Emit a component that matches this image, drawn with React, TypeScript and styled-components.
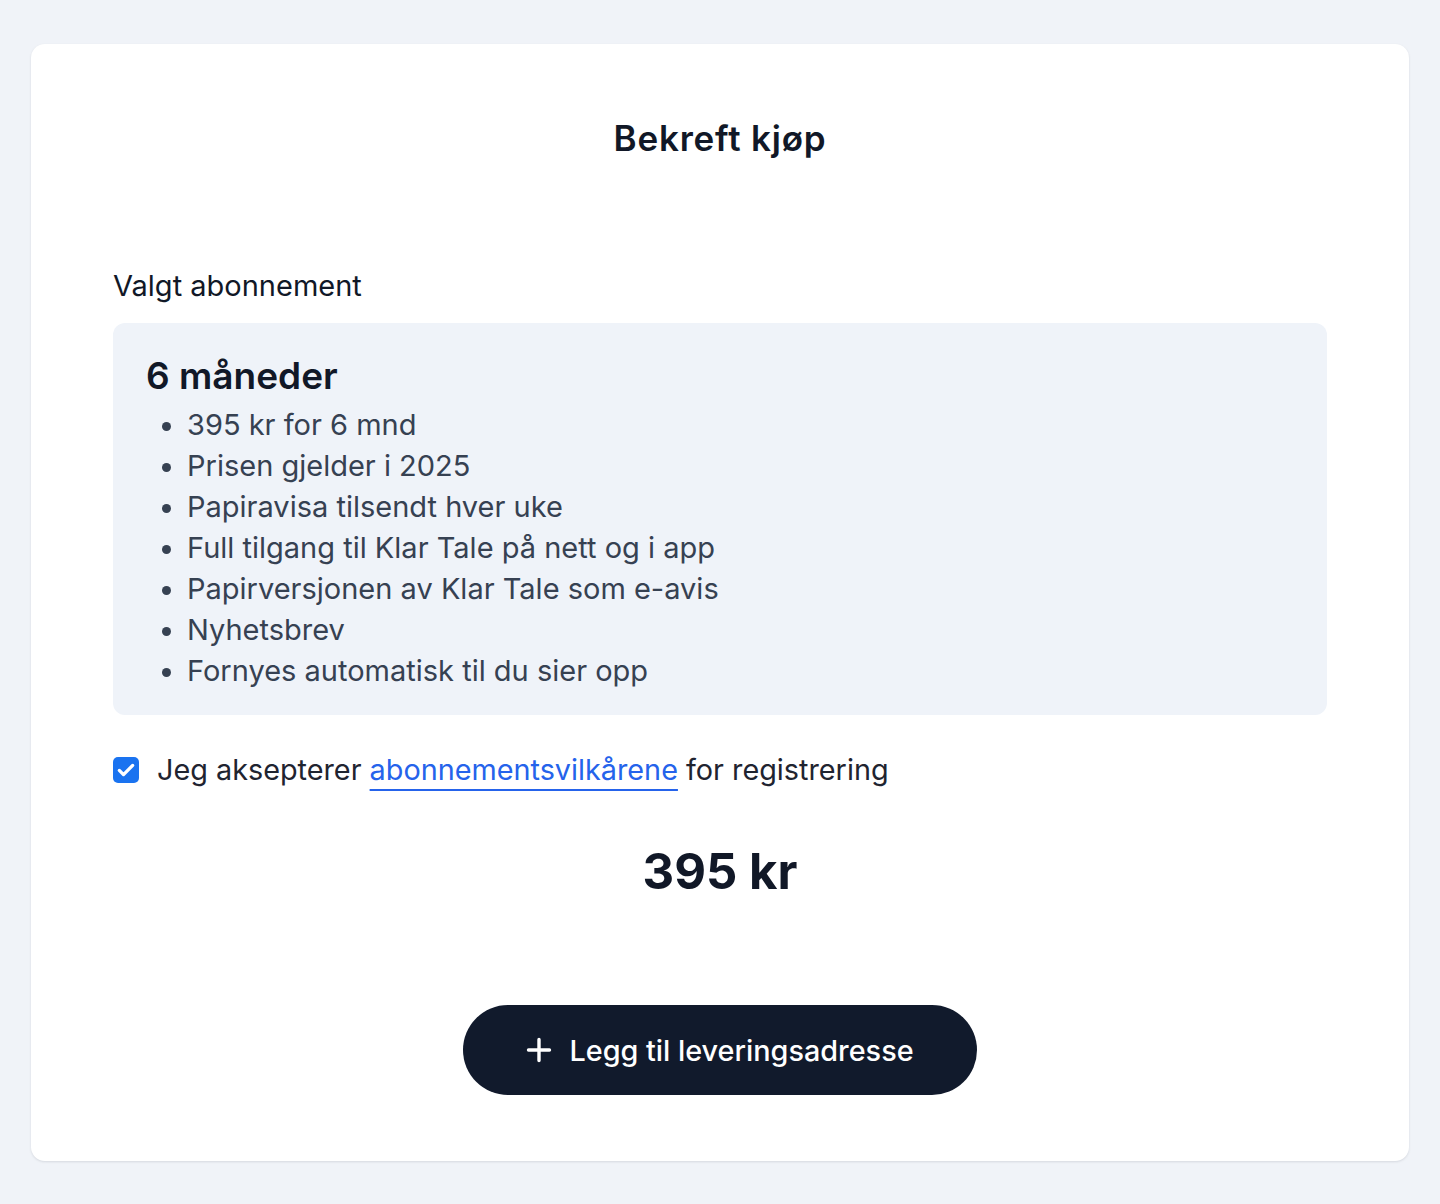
import styled, { createGlobalStyle } from 'styled-components';

const FEATURES = [
  '395 kr for 6 mnd',
  'Prisen gjelder i 2025',
  'Papiravisa tilsendt hver uke',
  'Full tilgang til Klar Tale på nett og i app',
  'Papirversjonen av Klar Tale som e-avis',
  'Nyhetsbrev',
  'Fornyes automatisk til du sier opp',
];

const GlobalStyle = createGlobalStyle`
  * { box-sizing: border-box; }
  body {
    margin: 0;
    background: #f0f3f8;
    font-family: Inter, "Noto Sans", sans-serif;
    color: #111827;
  }
`;

export default function App() {
  return (
    <>
      <GlobalStyle />
      <Page>
        <Card>
          <Title>Bekreft kjøp</Title>
          <Section>
            <Label>Valgt abonnement</Label>
            <PlanBox>
              <PlanName>6 måneder</PlanName>
              <FeatureList>
                {FEATURES.map((f) => (
                  <li key={f}>{f}</li>
                ))}
              </FeatureList>
            </PlanBox>
          </Section>
          <TermsRow>
            <CheckBox>
              <svg width="20" height="20" viewBox="0 0 24 24" fill="none">
                <path d="M4 12.5l5 5L20 6.5" stroke="#fff" strokeWidth="4" strokeLinecap="round" strokeLinejoin="round" />
              </svg>
            </CheckBox>
            <span>
              Jeg aksepterer <TermsLink href="#">abonnementsvilkårene</TermsLink> for registrering
            </span>
          </TermsRow>
          <Price>395 kr</Price>
          <ButtonRow>
            <PrimaryButton>
              <svg width="26" height="26" viewBox="0 0 26 26" fill="none">
                <path d="M13 2.5v21M2.5 13h21" stroke="#fff" strokeWidth="3.4" strokeLinecap="round" />
              </svg>
              Legg til leveringsadresse
            </PrimaryButton>
          </ButtonRow>
        </Card>
      </Page>
    </>
  );
}

const Page = styled.div`
  padding: 44px 31px;
`;

const Card = styled.div`
  background: #fff;
  border-radius: 14px;
  box-shadow: 0 1px 3px rgba(15, 23, 42, 0.08), 0 1px 2px rgba(15, 23, 42, 0.04);
  padding: 74px 82px 66px;
  display: flex;
  flex-direction: column;
`;

const Title = styled.h1`
  margin: 0;
  text-align: center;
  font-size: 35px;
  line-height: 40px;
  letter-spacing: 0.8px;
  font-weight: 600;
  color: #111827;
`;

const Section = styled.div`
  margin-top: 108px;
  display: flex;
  flex-direction: column;
  gap: 17px;
`;

const Label = styled.div`
  font-size: 29px;
  line-height: 40px;
  color: #111827;
`;

const PlanBox = styled.div`
  background: #eff3f9;
  border-radius: 12px;
  padding: 31px 33px 24px;
`;

const PlanName = styled.h2`
  margin: 0 0 6px;
  font-size: 37px;
  line-height: 44px;
  font-weight: 600;
  color: #111827;
`;

const FeatureList = styled.ul`
  margin: 0;
  padding-left: 41px;
  font-size: 29px;
  line-height: 41px;
  color: #364152;
`;

const TermsRow = styled.label`
  margin-top: 35px;
  display: flex;
  align-items: center;
  gap: 18px;
  font-size: 28.8px;
  line-height: 40px;
  color: #1f2430;
`;

const CheckBox = styled.span`
  width: 26px;
  height: 26px;
  border-radius: 5px;
  background: #1a73f0;
  display: grid;
  place-items: center;
  flex-shrink: 0;
`;

const TermsLink = styled.a`
  color: #2563eb;
  text-decoration: underline;
  text-decoration-thickness: 2px;
  text-underline-offset: 9px;
`;

const Price = styled.div`
  margin-top: 53px;
  text-align: center;
  font-size: 49px;
  line-height: 58px;
  font-weight: 700;
  color: #111827;
`;

const ButtonRow = styled.div`
  margin-top: 104px;
  display: flex;
  justify-content: center;
`;

const PrimaryButton = styled.button`
  width: 514px;
  height: 90px;
  border: none;
  border-radius: 45px;
  background: #111a2c;
  color: #fff;
  font-family: Inter, "Noto Sans", sans-serif;
  font-size: 28.8px;
  font-weight: 500;
  display: flex;
  align-items: center;
  justify-content: center;
  gap: 17px;
  cursor: pointer;
`;
